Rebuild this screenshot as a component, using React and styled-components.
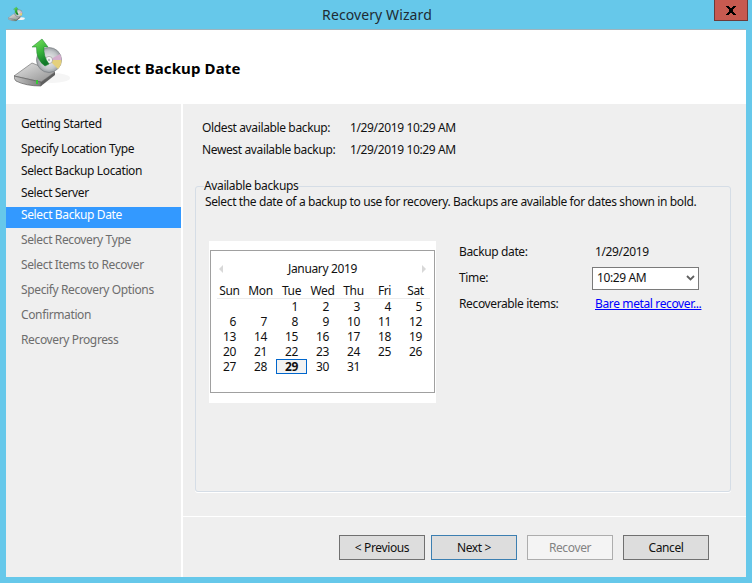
import React from 'react';
import styled, { createGlobalStyle } from 'styled-components';

const GlobalStyle = createGlobalStyle`
  html, body {
    margin: 0;
    padding: 0;
    background: #66c8ea;
  }
  * {
    box-sizing: border-box;
  }
`;

const steps = [
  { label: 'Getting Started', done: true, tight: false },
  { label: 'Specify Location Type', done: true, tight: false },
  { label: 'Select Backup Location', done: true, tight: true },
  { label: 'Select Server', done: true, tight: true },
  { label: 'Select Backup Date', active: true, tight: true },
  { label: 'Select Recovery Type', tight: false },
  { label: 'Select Items to Recover', tight: false },
  { label: 'Specify Recovery Options', tight: false },
  { label: 'Confirmation', tight: false },
  { label: 'Recovery Progress', tight: false },
];

const weekdays = ['Sun', 'Mon', 'Tue', 'Wed', 'Thu', 'Fri', 'Sat'];
// January 2019 starts on a Tuesday
const days = [null, null, ...Array.from({ length: 31 }, (_, i) => i + 1)];

function DriveIcon({ size }) {
  return (
    <svg width={size} height={size * 52 / 60} viewBox="0 0 60 52">
      <defs>
        <linearGradient id="driveTop" x1="0" y1="0" x2="1" y2="1">
          <stop offset="0" stopColor="#e6e6e6" />
          <stop offset="1" stopColor="#8f8f8f" />
        </linearGradient>
        <linearGradient id="driveFront" x1="0" y1="0" x2="1" y2="0">
          <stop offset="0" stopColor="#c4c4c4" />
          <stop offset="1" stopColor="#7a7a7a" />
        </linearGradient>
        <linearGradient id="arrowFill" x1="0" y1="0" x2="0.4" y2="1">
          <stop offset="0" stopColor="#7fe85f" />
          <stop offset="0.6" stopColor="#36b23a" />
          <stop offset="1" stopColor="#127a2a" />
        </linearGradient>
        <radialGradient id="discFill" cx="0.5" cy="0.5" r="0.55">
          <stop offset="0" stopColor="#f2f2f2" />
          <stop offset="0.65" stopColor="#c2c6c9" />
          <stop offset="1" stopColor="#8b9094" />
        </radialGradient>
      </defs>
      <ellipse cx="38" cy="42" rx="18" ry="5" fill="#f5f5f5" />
      <path d="M0 40 L18 27 L41 36 L27 46 Z" fill="url(#driveTop)" stroke="#777" strokeWidth="0.7" />
      <path d="M0 40 L27 46 L27 50 Q12 50 2 45 Q0 43 0 40 Z" fill="url(#driveFront)" stroke="#5f5f5f" strokeWidth="0.7" />
      <path d="M27 46 L41 36 L41 39 L27 50 Z" fill="#5f5f5f" />
      <rect x="22" y="44" width="2" height="4" fill="#35c934" />
      <circle cx="35" cy="24" r="12.5" fill="url(#discFill)" stroke="#6f7478" strokeWidth="0.6" />
      <path d="M35 24 L46 18 A12.5 12.5 0 0 1 47.5 24 Z" fill="#d4aecd" />
      <path d="M35 24 L47.5 24 A12.5 12.5 0 0 1 44 33 Z" fill="#e4d07c" />
      <circle cx="35" cy="24" r="3.6" fill="#f7f7f7" stroke="#8a8a8a" strokeWidth="0.6" />
      <circle cx="35" cy="24" r="1.2" fill="#b9bdc0" />
      <path
        d="M28 3 L34 11 L30 11 Q29 20 35 28 L31 30 Q22 24 22.5 11 L18 11 Z"
        fill="url(#arrowFill)"
        stroke="#17812a"
        strokeWidth="0.5"
      />
    </svg>
  );
}

function CloseGlyph() {
  return (
    <svg width="10" height="9" viewBox="0 0 10 9" shapeRendering="crispEdges">
      <path
        d="M0 0h3v1h1v1h2V1h1V0h3v1H9v1H8v1H7v3h1v1h1v1h1v1H7V8H6V7H4v1H3v1H0V8h1V7h1V6h1V3H2V2H1V1H0z"
        fill="#000"
      />
    </svg>
  );
}

function App() {
  return (
    <Window>
      <GlobalStyle />
      <TitleBar>
        <SmallIcon>
          <DriveIcon size={18} />
        </SmallIcon>
        <WindowTitle>Recovery Wizard</WindowTitle>
        <CloseButton>
          <CloseGlyph />
        </CloseButton>
      </TitleBar>
      <Client>
        <Header>
          <HeaderIcon>
            <DriveIcon size={60} />
          </HeaderIcon>
          <PageTitle>Select Backup Date</PageTitle>
        </Header>
        <Main>
          <Sidebar>
            {steps.map(step => (
              <Step key={step.label} $active={step.active} $done={step.done} $tight={step.tight}>
                {step.label}
              </Step>
            ))}
          </Sidebar>
          <Panel>
            <Content>
              <InfoList>
                <InfoRow>
                  <span>Oldest available backup:</span>
                  <span>1/29/2019 10:29 AM</span>
                </InfoRow>
                <InfoRow>
                  <span>Newest available backup:</span>
                  <span>1/29/2019 10:29 AM</span>
                </InfoRow>
              </InfoList>
              <Group>
                <GroupLabel>Available backups</GroupLabel>
                <Description>
                  Select the date of a backup to use for recovery. Backups are available for dates shown in bold.
                </Description>
                <GroupBody>
                  <CalendarFrame>
                    <Calendar>
                      <CalendarNav>
                        <NavArrow $dir="left" />
                        <span>January 2019</span>
                        <NavArrow $dir="right" />
                      </CalendarNav>
                      <WeekRow>
                        {weekdays.map(day => (
                          <span key={day}>{day}</span>
                        ))}
                      </WeekRow>
                      <WeekRule />
                      <DayGrid>
                        {days.map((day, i) => (
                          <DayCell key={i} $selected={day === 29}>
                            {day}
                          </DayCell>
                        ))}
                      </DayGrid>
                    </Calendar>
                  </CalendarFrame>
                  <Details>
                    <span>Backup date:</span>
                    <span>1/29/2019</span>
                    <span>Time:</span>
                    <TimeSelect>
                      10:29 AM
                      <svg width="9" height="6" viewBox="0 0 9 6">
                        <path d="M1 1l3.5 3.5L8 1" fill="none" stroke="#606060" strokeWidth="1.8" />
                      </svg>
                    </TimeSelect>
                    <span>Recoverable items:</span>
                    <ItemsLink href="#">Bare metal recover...</ItemsLink>
                  </Details>
                </GroupBody>
              </Group>
            </Content>
            <Footer>
              <Button>&lt; Previous</Button>
              <Button $focused>Next &gt;</Button>
              <Button $spaced disabled>Recover</Button>
              <Button $spaced>Cancel</Button>
            </Footer>
          </Panel>
        </Main>
      </Client>
    </Window>
  );
}

const Window = styled.div`
  width: 752px;
  height: 583px;
  overflow: hidden;
  display: flex;
  flex-direction: column;
  background: #66c8ea;
  font-family: 'Noto Sans', 'Open Sans', sans-serif;
  font-size: 12px;
  line-height: 16px;
  letter-spacing: -0.37px;
  color: #111;
`;

const TitleBar = styled.div`
  height: 29px;
  flex: none;
  display: grid;
  grid-template-columns: 1fr auto 1fr;
  padding: 0 4px 0 8px;
`;

const SmallIcon = styled.div`
  padding-top: 6px;
`;

const WindowTitle = styled.div`
  margin-left: -2px;
  font-size: 14px;
  line-height: 30px;
  letter-spacing: 0.1px;
  color: #1e2b33;
`;

const CloseButton = styled.div`
  justify-self: end;
  width: 34px;
  height: 21px;
  display: flex;
  align-items: center;
  justify-content: center;
  background: #c75a50;
  border: 1px solid #6d3a38;
  border-top: none;
`;

const Client = styled.div`
  flex: 1;
  margin: 0 6px 6px;
  display: flex;
  flex-direction: column;
  background: #efefef;
`;

const Header = styled.div`
  height: 75px;
  flex: none;
  display: flex;
  align-items: center;
  gap: 21px;
  padding-left: 8px;
  background: #fff;
  border-top: 1px solid #9fb4bd;
`;

const HeaderIcon = styled.div`
  align-self: flex-start;
  margin-top: 6px;
  line-height: 0;
`;

const PageTitle = styled.h1`
  margin: 2px 0 0;
  font-size: 15px;
  line-height: 20px;
  font-weight: 700;
  letter-spacing: 0.12px;
  color: #000;
`;

const Main = styled.div`
  flex: 1;
  display: grid;
  grid-template-columns: 177px 1fr;
`;

const Sidebar = styled.nav`
  display: flex;
  flex-direction: column;
  padding-top: 8px;
  border-right: 2px solid #fff;
`;

const Step = styled.div`
  height: 21px;
  margin-top: ${props => (props.$tight ? '1px' : '4px')};
  padding-left: 15px;
  background: ${props => (props.$active ? '#3399ff' : 'transparent')};
  color: ${props => (props.$active ? '#fff' : props.$done ? '#111' : '#6d6d6d')};
`;

const Panel = styled.div`
  display: flex;
  flex-direction: column;
`;

const Content = styled.div`
  flex: 1;
  padding: 16px 15px 0 12px;
`;

const InfoList = styled.div`
  display: flex;
  flex-direction: column;
  gap: 6px;
  padding-left: 7px;
`;

const InfoRow = styled.div`
  display: grid;
  grid-template-columns: 148px 1fr;
`;

const Group = styled.fieldset`
  height: 314px;
  min-width: 0;
  margin: 20px 0 0;
  padding: 0 0 0 9px;
  border: 1px solid #d5dde6;
  border-radius: 3px;
  box-shadow: 0 1px 0 #fff;
`;

const GroupLabel = styled.legend`
  margin-left: -1px;
  padding: 0;
  line-height: 16px;
`;

const Description = styled.div`
  white-space: nowrap;
`;

const GroupBody = styled.div`
  display: flex;
  gap: 23px;
  margin: 31px 0 0 4px;
`;

const CalendarFrame = styled.div`
  width: 227px;
  height: 162px;
  flex: none;
  padding: 9px 1px 10px;
  background: #fff;
`;

const Calendar = styled.div`
  height: 143px;
  padding: 10px 0 0 3px;
  border: 1px solid #a0a0a0;
`;

const CalendarNav = styled.div`
  height: 16px;
  display: flex;
  align-items: center;
  justify-content: space-between;
  margin: 0 0 6px -3px;
  padding: 0 8px;
`;

const NavArrow = styled.span`
  width: 0;
  height: 0;
  border-top: 4px solid transparent;
  border-bottom: 4px solid transparent;
  ${props =>
    props.$dir === 'left' ? 'border-right: 4px solid #d8d8d8;' : 'border-left: 4px solid #d8d8d8;'}
`;

const WeekRow = styled.div`
  display: grid;
  grid-template-columns: repeat(7, 31px);
  height: 15px;
  line-height: 15px;
  text-align: center;
`;

const WeekRule = styled.div`
  height: 1px;
  margin: 0 4px 0 3px;
  background: #ececec;
`;

const DayGrid = styled.div`
  display: grid;
  grid-template-columns: repeat(7, 31px);
  grid-auto-rows: 15px;
`;

const DayCell = styled.div`
  padding-right: ${props => (props.$selected ? '8px' : '9px')};
  text-align: right;
  line-height: 15px;
  font-weight: ${props => (props.$selected ? 700 : 400)};
  ${props => props.$selected && 'border: 1px solid #0066cc; line-height: 13px; background: #f2f2f2;'}
`;

const Details = styled.div`
  display: grid;
  grid-template-columns: 136px 110px;
  grid-auto-rows: 16px;
  row-gap: 10px;
  align-items: center;
  margin-top: 3px;
  white-space: nowrap;
`;

const TimeSelect = styled.div`
  width: 107px;
  height: 23px;
  margin-left: -3px;
  display: flex;
  align-items: center;
  justify-content: space-between;
  padding: 0 3px 0 4px;
  background: #fff;
  border: 1px solid #7a7a7a;
`;

const ItemsLink = styled.a`
  color: #0000ff;
  text-decoration: underline;
`;

const Footer = styled.div`
  height: 61px;
  flex: none;
  display: flex;
  padding: 18px 37px 0 0;
  justify-content: flex-end;
  gap: 6px;
  border-top: 1px solid #fff;
`;

const Button = styled.button`
  width: 86px;
  height: 25px;
  margin-left: ${props => (props.$spaced ? '4px' : '0')};
  padding: 0;
  font: inherit;
  letter-spacing: inherit;
  color: #111;
  background: #dddddd;
  border: 1px solid ${props => (props.$focused ? '#3c7fb1' : '#707070')};

  &:disabled {
    color: #838383;
    background: #f4f4f4;
    border-color: #adadad;
  }
`;

export default App;
